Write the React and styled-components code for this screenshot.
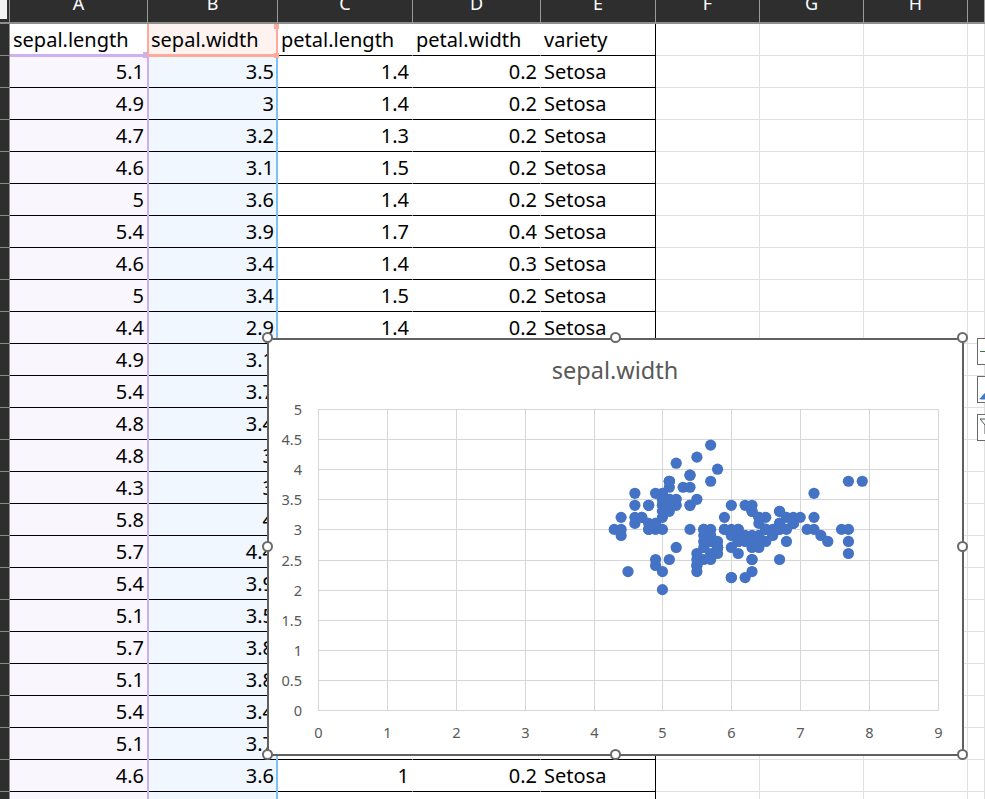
import React from 'react';
import styled, { createGlobalStyle, css } from 'styled-components';

const GlobalStyle = createGlobalStyle`
  html, body {
    margin: 0;
    padding: 0;
    width: 985px;
    height: 799px;
    overflow: hidden;
    background: #fff;
  }
  body {
    font-family: "Noto Sans", "Noto Sans CJK TC", sans-serif;
  }
`;

const rows = [
  [5.1, 3.5, 1.4, 0.2], [4.9, 3, 1.4, 0.2], [4.7, 3.2, 1.3, 0.2], [4.6, 3.1, 1.5, 0.2],
  [5, 3.6, 1.4, 0.2], [5.4, 3.9, 1.7, 0.4], [4.6, 3.4, 1.4, 0.3], [5, 3.4, 1.5, 0.2],
  [4.4, 2.9, 1.4, 0.2], [4.9, 3.1, 1.5, 0.1], [5.4, 3.7, 1.5, 0.2], [4.8, 3.4, 1.6, 0.2],
  [4.8, 3, 1.4, 0.1], [4.3, 3, 1.1, 0.1], [5.8, 4, 1.2, 0.2], [5.7, 4.4, 1.5, 0.4],
  [5.4, 3.9, 1.3, 0.4], [5.1, 3.5, 1.4, 0.3], [5.7, 3.8, 1.7, 0.3], [5.1, 3.8, 1.5, 0.3],
  [5.4, 3.4, 1.7, 0.2], [5.1, 3.7, 1.5, 0.4], [4.6, 3.6, 1, 0.2], [5.1, 3.3, 1.7, 0.5],
];

// sepal.length, sepal.width for all 150 rows
const points = `5.1 3.5;4.9 3;4.7 3.2;4.6 3.1;5 3.6;5.4 3.9;4.6 3.4;5 3.4;4.4 2.9;4.9 3.1;5.4 3.7;4.8 3.4;4.8 3;4.3 3;5.8 4;5.7 4.4;5.4 3.9;5.1 3.5;5.7 3.8;5.1 3.8;5.4 3.4;5.1 3.7;4.6 3.6;5.1 3.3;4.8 3.4;5 3;5 3.4;5.2 3.5;5.2 3.4;4.7 3.2;4.8 3.1;5.4 3.4;5.2 4.1;5.5 4.2;4.9 3.1;5 3.2;5.5 3.5;4.9 3.6;4.4 3;5.1 3.4;5 3.5;4.5 2.3;4.4 3.2;5 3.5;5.1 3.8;4.8 3;5.1 3.8;4.6 3.2;5.3 3.7;5 3.3;7 3.2;6.4 3.2;6.9 3.1;5.5 2.3;6.5 2.8;5.7 2.8;6.3 3.3;4.9 2.4;6.6 2.9;5.2 2.7;5 2;5.9 3;6 2.2;6.1 2.9;5.6 2.9;6.7 3.1;5.6 3;5.8 2.7;6.2 2.2;5.6 2.5;5.9 3.2;6.1 2.8;6.3 2.5;6.1 2.8;6.4 2.9;6.6 3;6.8 2.8;6.7 3;6 2.9;5.7 2.6;5.5 2.4;5.5 2.4;5.8 2.7;6 2.7;5.4 3;6 3.4;6.7 3.1;6.3 2.3;5.6 3;5.5 2.5;5.5 2.6;6.1 3;5.8 2.6;5 2.3;5.6 2.7;5.7 3;5.7 2.9;6.2 2.9;5.1 2.5;5.7 2.8;6.3 3.3;5.8 2.7;7.1 3;6.3 2.9;6.5 3;7.6 3;4.9 2.5;7.3 2.9;6.7 2.5;7.2 3.6;6.5 3.2;6.4 2.7;6.8 3;5.7 2.5;5.8 2.8;6.4 3.2;6.5 3;7.7 3.8;7.7 2.6;6 2.2;6.9 3.2;5.6 2.8;7.7 2.8;6.3 2.7;6.7 3.3;7.2 3.2;6.2 2.8;6.1 3;6.4 2.8;7.2 3;7.4 2.8;7.9 3.8;6.4 2.8;6.3 2.8;6.1 2.6;7.7 3;6.3 3.4;6.4 3.1;6 3;6.9 3.1;6.7 3.1;6.9 3.1;5.8 2.7;6.8 3.2;6.7 3.3;6.7 3;6.3 2.5;6.5 3;6.2 3.4;5.9 3`
  .split(';')
  .map((p) => p.split(' ').map(Number));

const Page = styled.div`
  position: relative;
  width: 985px;
  height: 799px;
  overflow: hidden;
`;

const Sheet = styled.div`
  display: grid;
  grid-template-columns: 10px 138px 130px 135px 128px 115px 104px 104px 104px 17px;
  grid-auto-rows: 32px;
  grid-template-rows: 24px;
  color: #000;
`;

const Corner = styled.div`
  background: #2e2e2e;
  border-right: 1px solid #8e8e8e;
  border-bottom: 2px solid #8e8e8e;
  box-sizing: border-box;
  position: relative;
  &::before {
    content: '';
    position: absolute;
    left: 0;
    top: 0;
    width: 7px;
    height: 19px;
    background: #f2f2f2;
  }
`;

const ColHead = styled.div`
  box-sizing: border-box;
  background: #2e2e2e;
  border-right: 1px solid #9a9a9a;
  border-bottom: 2px solid #8e8e8e;
  color: #fff;
  font-size: 18px;
  line-height: 24px;
  text-align: center;
  overflow: hidden;
  & > span {
    display: block;
    margin-top: -9px;
  }
`;

const RowHead = styled.div`
  box-sizing: border-box;
  background: #2e2e2e;
  border-right: 1px solid #8e8e8e;
  border-bottom: 1px solid #8a8a8a;
`;

// later cells paint over earlier ones, so each range cell needs its own layer
const rangeColors = {
  lengthHead: css`
    background: #fff;
    z-index: 3;
    &::after { border-bottom: 3px solid #cdb0f2; }
  `,
  widthHead: css`
    background: #fff3f0;
    z-index: 3;
    &::after {
      border: solid #ffa99c;
      border-width: 0 2px 3px 2px;
    }
  `,
  length: css`
    background: #f9f6fe;
    z-index: 2;
    &::after { border-right: 2px solid #cdb0f2; right: -2px; }
  `,
  width: css`
    background: #f0f7fe;
    z-index: 1;
    &::after { border-right: 2px solid #7cc0fa; right: -1px; }
  `,
};

const Cell = styled.div`
  box-sizing: border-box;
  position: relative;
  border-right: 1px solid ${(p) => (p.$last ? '#000' : 'transparent')};
  border-bottom: 1px solid #000;
  font-size: 20px;
  line-height: 31px;
  padding: 0 3px;
  white-space: nowrap;
  overflow: visible;
  text-align: ${(p) => (p.$num ? 'right' : 'left')};
  &::after {
    content: '';
    position: absolute;
    left: ${(p) => (p.$range === 'widthHead' ? '-1px' : '0')};
    top: 0;
    right: -1px;
    bottom: -2px;
    pointer-events: none;
    display: ${(p) => (p.$range ? 'block' : 'none')};
  }
  ${(p) => p.$range && rangeColors[p.$range]}
`;

const Blank = styled.div`
  box-sizing: border-box;
  border-right: 1px solid #e0e0e0;
  border-bottom: 1px solid #e0e0e0;
`;

const RangeHandle = styled.i`
  position: absolute;
  z-index: 2;
  width: ${(p) => p.$size}px;
  height: ${(p) => p.$size}px;
  background: ${(p) => p.$color};
  right: ${(p) => p.$right}px;
  ${(p) => (p.$top ? 'top: 0;' : `bottom: ${p.$bottom}px;`)}
`;

const Chart = styled.div`
  position: absolute;
  z-index: 5;
  left: 267px;
  top: 338px;
  width: 697px;
  height: 418px;
  box-sizing: border-box;
  background: #fff;
  border: 2px solid #606060;
`;

const Plot = styled.svg`
  display: block;
  width: 693px;
  height: 414px;
  font-family: "Noto Sans", sans-serif;
`;

const Handle = styled.span`
  position: absolute;
  width: 7px;
  height: 7px;
  border: 2.5px solid #6a6a6a;
  border-radius: 50%;
  background: #fff;
  left: calc(${(p) => p.$x}% + ${(p) => -7 + p.$x / 50}px);
  top: calc(${(p) => p.$y}% + ${(p) => -8 + (3 * p.$y) / 100}px);
`;

const SideTools = styled.div`
  position: absolute;
  z-index: 5;
  left: 977px;
  top: 338px;
  display: flex;
  flex-direction: column;
  gap: 11px;
`;

const SideButton = styled.div`
  box-sizing: border-box;
  width: 30px;
  height: 27px;
  background: #fff;
  border: 1px solid #6a6a6a;
  overflow: hidden;
`;

const ToolIcon = styled.svg`
  display: block;
  width: 28px;
  height: 25px;
`;

const X0 = 318 - 269;
const Y0 = 710 - 340;
const XS = 68.89;
const YS = 60.2;

const ScatterChart = () => {
  const ys = [0, 0.5, 1, 1.5, 2, 2.5, 3, 3.5, 4, 4.5, 5];
  const xs = [0, 1, 2, 3, 4, 5, 6, 7, 8, 9];
  return (
    <Plot viewBox="0 0 693 414">
      <text x="346" y="39" textAnchor="middle" fontSize="23.5" fill="#595959">
        sepal.width
      </text>
      {ys.map((v) => {
        const y = Math.round(Y0 - v * YS) + 0.5;
        return (
          <g key={v}>
            <line x1={X0} x2={X0 + 9 * XS + 1} y1={y} y2={y} stroke="#d6d6d6" />
            <text x={X0 - 16} y={y + 5} textAnchor="end" fontSize="14.6" fill="#595959">
              {v}
            </text>
          </g>
        );
      })}
      {xs.map((v) => {
        const x = Math.round(X0 + v * XS) + 0.5;
        return (
          <g key={v}>
            <line x1={x} x2={x} y1={Y0 - 5 * YS} y2={Y0} stroke="#d6d6d6" />
            <text x={x} y={Y0 + 28} textAnchor="middle" fontSize="14.6" fill="#595959">
              {v}
            </text>
          </g>
        );
      })}
      {points.map(([x, y], i) => (
        <circle key={i} cx={X0 + x * XS} cy={Y0 - y * YS} r="5.6" fill="#4472c4" />
      ))}
    </Plot>
  );
};

const handles = [
  [0, 0], [50, 0], [100, 0],
  [0, 50], [100, 50],
  [0, 100], [50, 100], [100, 100],
];

export default function App() {
  return (
    <Page>
      <GlobalStyle />
      <Sheet>
        <Corner />
        {['A', 'B', 'C', 'D', 'E', 'F', 'G', 'H', ''].map((c, i) => (
          <ColHead key={i}><span>{c || '\u00a0'}</span></ColHead>
        ))}

        <RowHead />
        <Cell $range="lengthHead">
          sepal.length
          <RangeHandle $size={6} $color="#cdb0f2" $right={-2} $bottom={-3} />
        </Cell>
        <Cell $range="widthHead">
          sepal.width
          <RangeHandle $size={5} $color="#ffa99c" $right={-2} $top />
          <RangeHandle $size={5} $color="#ffa99c" $right={-2} $bottom={-3} />
        </Cell>
        <Cell>petal.length</Cell>
        <Cell>petal.width</Cell>
        <Cell $last>variety</Cell>
        <Blank /><Blank /><Blank /><Blank />

        {rows.map((r, i) => (
          <React.Fragment key={i}>
            <RowHead />
            <Cell $num $range="length">{r[0]}</Cell>
            <Cell $num $range="width">{r[1]}</Cell>
            <Cell $num>{r[2]}</Cell>
            <Cell $num>{r[3]}</Cell>
            <Cell $last>Setosa</Cell>
            <Blank /><Blank /><Blank /><Blank />
          </React.Fragment>
        ))}
      </Sheet>

      <Chart>
        <ScatterChart />
        {handles.map(([x, y]) => (
          <Handle key={`${x}-${y}`} $x={x} $y={y} />
        ))}
      </Chart>

      <SideTools>
        <SideButton>
          <ToolIcon viewBox="0 0 28 25">
            <path d="M2 12.5h12M8 6.5v12" stroke="#2e7d32" fill="none" />
          </ToolIcon>
        </SideButton>
        <SideButton>
          <ToolIcon viewBox="0 0 28 25">
            <path d="M1 22c2-1 3-4 6-6l6 4c-2 3-8 3-12 2z" fill="#3f7cc4" />
          </ToolIcon>
        </SideButton>
        <SideButton>
          <ToolIcon viewBox="0 0 28 25">
            <path d="M2 4h14l-5 6v6l-4 3v-9z" stroke="#555" fill="#f2fafa" />
          </ToolIcon>
        </SideButton>
      </SideTools>
    </Page>
  );
}
